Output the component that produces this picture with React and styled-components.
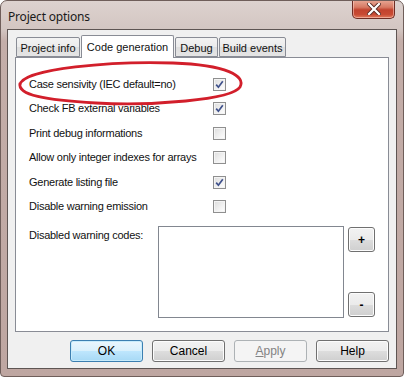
import React from "react";
import styled, { createGlobalStyle } from "styled-components";

const GlobalStyle = createGlobalStyle`
  html, body {
    margin: 0;
    padding: 0;
    background: #ffffff;
  }
  body {
    font-family: "Liberation Sans", Arial, sans-serif;
  }
`;

const options = [
  { label: "Case sensivity (IEC default=no)", checked: true },
  { label: "Check FB external variables", checked: true },
  { label: "Print debug informations", checked: false },
  { label: "Allow only integer indexes for arrays", checked: false },
  { label: "Generate listing file", checked: true },
  { label: "Disable warning emission", checked: false },
];

const tabs = [
  { label: "Project info", width: 64 },
  { label: "Code generation", width: 93 },
  { label: "Debug", width: 43 },
  { label: "Build events", width: 67 },
];

const CheckMark = () => (
  <svg width="9" height="9" viewBox="0 0 9 9">
    <path
      d="M1.2 4.6 L3.4 7.2 L7.8 1.2"
      fill="none"
      stroke="#40528c"
      strokeWidth="1.7"
      strokeLinejoin="miter"
    />
  </svg>
);

const CloseGlyph = () => (
  <svg width="14" height="12" viewBox="0 0 14 12">
    <path
      d="M2 1 L12 11 M12 1 L2 11"
      stroke="#5a2a22"
      strokeWidth="4"
      strokeLinecap="square"
    />
    <path
      d="M2 1 L12 11 M12 1 L2 11"
      stroke="#ffffff"
      strokeWidth="2.2"
      strokeLinecap="square"
    />
  </svg>
);

export default function App() {
  return (
    <>
      <GlobalStyle />
      <Window>
        <TitleBar>
          <Title>Project options</Title>
          <CloseButton>
            <CloseGlyph />
          </CloseButton>
        </TitleBar>

        <Client>
          <TabStrip>
            {tabs.map((t, i) => (
              <Tab key={t.label} $active={i === 1} $width={t.width}>
                {t.label}
              </Tab>
            ))}
          </TabStrip>

          <Panel>
            <OptionList>
              {options.map((o) => (
                <OptionRow key={o.label}>
                  <OptionLabel>{o.label}</OptionLabel>
                  <CheckBox>{o.checked && <CheckMark />}</CheckBox>
                </OptionRow>
              ))}
            </OptionList>

            <WarningRow>
              <OptionLabel>Disabled warning codes:</OptionLabel>
              <CodesBox />
              <SideButtons>
                <SmallButton>+</SmallButton>
                <SmallButton>-</SmallButton>
              </SideButtons>
            </WarningRow>
          </Panel>

          <ButtonBar>
            <DialogButton $default>OK</DialogButton>
            <DialogButton>Cancel</DialogButton>
            <DialogButton disabled>
              <u>A</u>pply
            </DialogButton>
            <DialogButton>Help</DialogButton>
          </ButtonBar>
        </Client>

        <Annotation width="404" height="377" viewBox="0 0 404 377">
          <path
            d="M19 84 C 20 67, 115 60, 172 62 C 226 64, 245 75, 239 86 C 231 99, 150 105, 95 102 C 44 99, 16 94, 19 82"
            fill="none"
            stroke="#d21f2b"
            strokeWidth="2.8"
          />
        </Annotation>
      </Window>
    </>
  );
}

const Window = styled.div`
  position: relative;
  width: 404px;
  height: 377px;
  box-sizing: border-box;
  display: flex;
  flex-direction: column;
  border: 1px solid #6f5e5a;
  border-radius: 7px 7px 4px 4px;
  background: linear-gradient(
    to bottom,
    #ddd2cf 0px,
    #d3c6c2 28px,
    #c4aea9 40px,
    #bea6a1 100%
  );
  overflow: hidden;
`;

const TitleBar = styled.div`
  height: 28px;
  display: flex;
  align-items: flex-start;
  justify-content: space-between;
  padding-left: 7px;
  padding-right: 8px;
`;

const Title = styled.div`
  margin-top: 7px;
  font-family: "Noto Sans", "Liberation Sans", sans-serif;
  font-size: 12px;
  letter-spacing: -0.2px;
  color: #1a1a1a;
`;

const CloseButton = styled.div`
  width: 43px;
  height: 19px;
  margin-top: -1px;
  display: flex;
  align-items: center;
  justify-content: center;
  box-sizing: border-box;
  border: 1px solid #6e2d24;
  border-top: none;
  border-radius: 0 0 5px 5px;
  background: linear-gradient(
    to bottom,
    #e9a996 0%,
    #d77a64 40%,
    #c2432e 55%,
    #c84a33 80%,
    #e07a5c 100%
  );
  box-shadow: inset 0 0 0 1px rgba(255, 220, 210, 0.5);
`;

const Client = styled.div`
  flex: 1;
  margin: 0 6px 7px 6px;
  border: 1px solid #5e5553;
  background: #f0f0f0;
  display: flex;
  flex-direction: column;
  padding: 5px 7px 0 7px;
  font-family: "Liberation Sans", Arial, sans-serif;
  font-size: 11px;
  color: #000;
`;

const TabStrip = styled.div`
  display: flex;
  align-items: flex-end;
  height: 22px;
  padding-left: 1px;
  position: relative;
  z-index: 1;
`;

const Tab = styled.div`
  box-sizing: border-box;
  width: ${(p) => p.$width}px;
  height: ${(p) => (p.$active ? "23px" : "20px")};
  margin-bottom: ${(p) => (p.$active ? "-1px" : "0")};
  padding-top: ${(p) => (p.$active ? "4px" : "3px")};
  margin-right: 1px;
  border: 1px solid #898c95;
  border-bottom: ${(p) => (p.$active ? "none" : "1px solid #898c95")};
  border-radius: 2px 2px 0 0;
  background: ${(p) =>
    p.$active
      ? "#ffffff"
      : "linear-gradient(to bottom, #f3f3f3 0%, #ebebeb 50%, #dedede 51%, #e5e5e5 100%)"};
  text-align: center;
  font-size: 11px;
  line-height: 14px;
  white-space: nowrap;
  color: #111;
`;

const Panel = styled.div`
  box-sizing: border-box;
  height: 275px;
  border: 1px solid #898c95;
  background: #ffffff;
  padding: 14px 13px 0 13px;
  display: flex;
  flex-direction: column;
`;

const OptionList = styled.div`
  display: flex;
  flex-direction: column;
`;

const OptionRow = styled.div`
  height: 24.5px;
  display: flex;
  align-items: center;
`;

const OptionLabel = styled.div`
  width: 184px;
  flex-shrink: 0;
  white-space: nowrap;
  font-size: 11px;
  line-height: 13px;
  letter-spacing: -0.25px;
  color: #111;
`;

const CheckBox = styled.div`
  box-sizing: border-box;
  width: 13px;
  height: 13px;
  border: 1px solid #8f8f8f;
  background: linear-gradient(135deg, #dcdcdc 0%, #f2f2f2 60%, #ffffff 100%);
  box-shadow: inset 0 0 0 1px #f4f4f4;
  display: flex;
  align-items: center;
  justify-content: center;
`;

const WarningRow = styled.div`
  margin-top: 7px;
  display: flex;
  align-items: flex-start;

  & > ${OptionLabel} {
    width: 129px;
    margin-top: 3px;
  }
`;

const CodesBox = styled.div`
  box-sizing: border-box;
  width: 186px;
  height: 92px;
  border: 1px solid #828790;
  background: #ffffff;
`;

const SideButtons = styled.div`
  height: 92px;
  margin-left: 4px;
  padding: 1px 0;
  box-sizing: border-box;
  display: flex;
  flex-direction: column;
  justify-content: space-between;
`;

const buttonFace = `
  background: linear-gradient(
    to bottom,
    #f2f2f2 0%,
    #ebebeb 50%,
    #dddddd 51%,
    #cfcfcf 100%
  );
  border: 1px solid #707070;
  box-shadow: inset 0 0 0 1px #fcfcfc;
`;

const SmallButton = styled.div`
  box-sizing: border-box;
  width: 27px;
  height: 25px;
  border-radius: 3px;
  ${buttonFace}
  display: flex;
  align-items: center;
  justify-content: center;
  font-size: 12px;
  font-weight: bold;
  line-height: 1;
`;

const ButtonBar = styled.div`
  display: flex;
  justify-content: flex-end;
  gap: 9px;
  margin-top: 8px;
`;

const DialogButton = styled.div`
  box-sizing: border-box;
  width: 73px;
  height: 22px;
  border-radius: 3px;
  ${buttonFace}
  display: flex;
  align-items: center;
  justify-content: center;
  font-size: 12px;
  color: #000;

  ${(p) =>
    p.$default &&
    `
    border-color: #3c7fb1;
    background: linear-gradient(to bottom, #eaf6fd 0%, #d9f0fc 50%, #bee6fd 51%, #a7d9f5 100%);
    box-shadow: inset 0 0 0 1px #c8ecfc;
  `}

  ${(p) =>
    p.disabled &&
    `
    border-color: #adb2b5;
    background: #f4f4f4;
    box-shadow: none;
    color: #838383;
  `}
`;

const Annotation = styled.svg`
  position: absolute;
  left: 0;
  top: 0;
  pointer-events: none;
`;
